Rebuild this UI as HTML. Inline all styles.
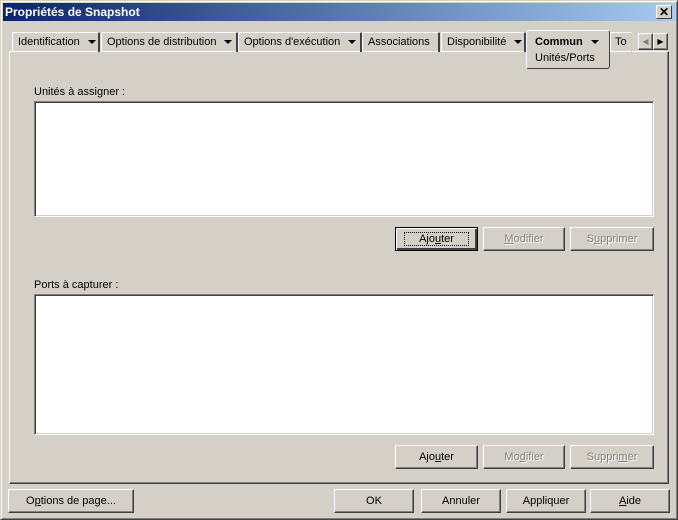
<!DOCTYPE html>
<html><head><meta charset="utf-8"><style>
*{margin:0;padding:0;box-sizing:border-box}
body{width:678px;height:520px;background:#d4d0c8;font-family:"Liberation Sans",sans-serif;font-size:11px;color:#000;position:relative;overflow:hidden}
.win{position:absolute;left:0;top:0;width:678px;height:520px;border:1px solid;border-color:#d4d0c8 #404040 #404040 #d4d0c8;box-shadow:inset 1px 1px #fff,inset -1px -1px #808080}
.title{position:absolute;left:3px;top:3px;width:672px;height:18px;background:linear-gradient(to right,#0a246a,#a6caf0);color:#fff;font-weight:bold;font-size:12px;line-height:18px;padding-left:2px}
.x{position:absolute;left:656px;top:5px;width:16px;height:14px;background:#d4d0c8;border:1px solid;border-color:#fff #404040 #404040 #fff;font-size:12px;line-height:12px;text-align:center;font-weight:bold;color:#000}
.a{position:absolute}
.tab{position:absolute;top:32px;height:20px;border-top:1px solid #fff;border-left:1px solid #fff;border-right:2px solid #404040;line-height:19px;padding-left:5px;border-radius:2px 2px 0 0;white-space:nowrap}
.tri{display:inline-block;width:0;height:0;border-left:4px solid transparent;border-right:4px solid transparent;border-top:4px solid #000;vertical-align:middle;margin-left:8px}
.panel{position:absolute;left:9px;top:51px;width:660px;height:433px;border:1px solid;border-color:#fff #404040 #404040 #fff;box-shadow:inset -1px -1px #808080}
.list{position:absolute;background:#fff;border:1px solid;border-color:#808080 #fff #fff #808080;box-shadow:inset 1px 1px #404040,inset -1px -1px #d4d0c8}
.btn{position:absolute;height:24px;border:1px solid;border-color:#fff #404040 #404040 #fff;box-shadow:inset -1px -1px #808080;text-align:center;line-height:23px}
.dis{color:#808080;text-shadow:1px 1px #fff}
</style></head><body>
<div class="win"></div>
<div class="title">Propriétés de Snapshot</div>
<div class="x">✕</div>
<div class="panel"></div>
<div class="tab" style="left:12px;width:88px">Identification<span class="tri"></span></div>
<div class="tab" style="left:101px;width:137px">Options de distribution<span class="tri"></span></div>
<div class="tab" style="left:238px;width:124px">Options d'exécution<span class="tri"></span></div>
<div class="tab" style="left:362px;width:78px">Associations</div>
<div class="tab" style="left:441px;width:85px">Disponibilité<span class="tri"></span></div>
<div class="a" style="left:526px;top:30px;width:84px;height:39px;background:#d4d0c8;border:1px solid;border-color:#fff #404040 #404040 #fff;border-radius:3px;padding-left:8px;padding-top:3px;line-height:16px"><b>Commun</b><span class="tri"></span><br>Unités/Ports</div>
<div class="tab" style="left:610px;width:22px;border-right:1px solid #ccc;padding-left:4px">To</div>
<div class="btn" style="left:638px;top:33px;width:15px;height:17px;line-height:15px;font-size:8px;color:#808080">◀</div>
<div class="btn" style="left:653px;top:33px;width:15px;height:17px;line-height:15px;font-size:8px">▶</div>
<div class="a" style="left:34px;top:86px">Unités à assigner :</div>
<div class="list" style="left:34px;top:101px;width:620px;height:116px"></div>
<div class="btn" style="left:395px;top:227px;width:83px;border-color:#000;box-shadow:inset 1px 1px #fff,inset -2px -2px #404040"><span style="outline:1px dotted #000;padding:0 14px">Ajo<u>u</u>ter</span></div>
<div class="btn dis" style="left:483px;top:227px;width:82px"><u>M</u>odifier</div>
<div class="btn dis" style="left:570px;top:227px;width:84px">S<u>u</u>pprimer</div>
<div class="a" style="left:34px;top:279px">Ports à capturer :</div>
<div class="list" style="left:34px;top:294px;width:620px;height:141px"></div>
<div class="btn" style="left:395px;top:445px;width:83px">Ajo<u>u</u>ter</div>
<div class="btn dis" style="left:483px;top:445px;width:82px">Mo<u>d</u>ifier</div>
<div class="btn dis" style="left:570px;top:445px;width:84px">Suppri<u>m</u>er</div>
<div class="btn" style="left:8px;top:489px;width:126px">O<u>p</u>tions de page...</div>
<div class="btn" style="left:334px;top:489px;width:80px">OK</div>
<div class="btn" style="left:421px;top:489px;width:80px">Annuler</div>
<div class="btn" style="left:506px;top:489px;width:80px">Appliquer</div>
<div class="btn" style="left:590px;top:489px;width:80px"><u>A</u>ide</div>
</body></html>
